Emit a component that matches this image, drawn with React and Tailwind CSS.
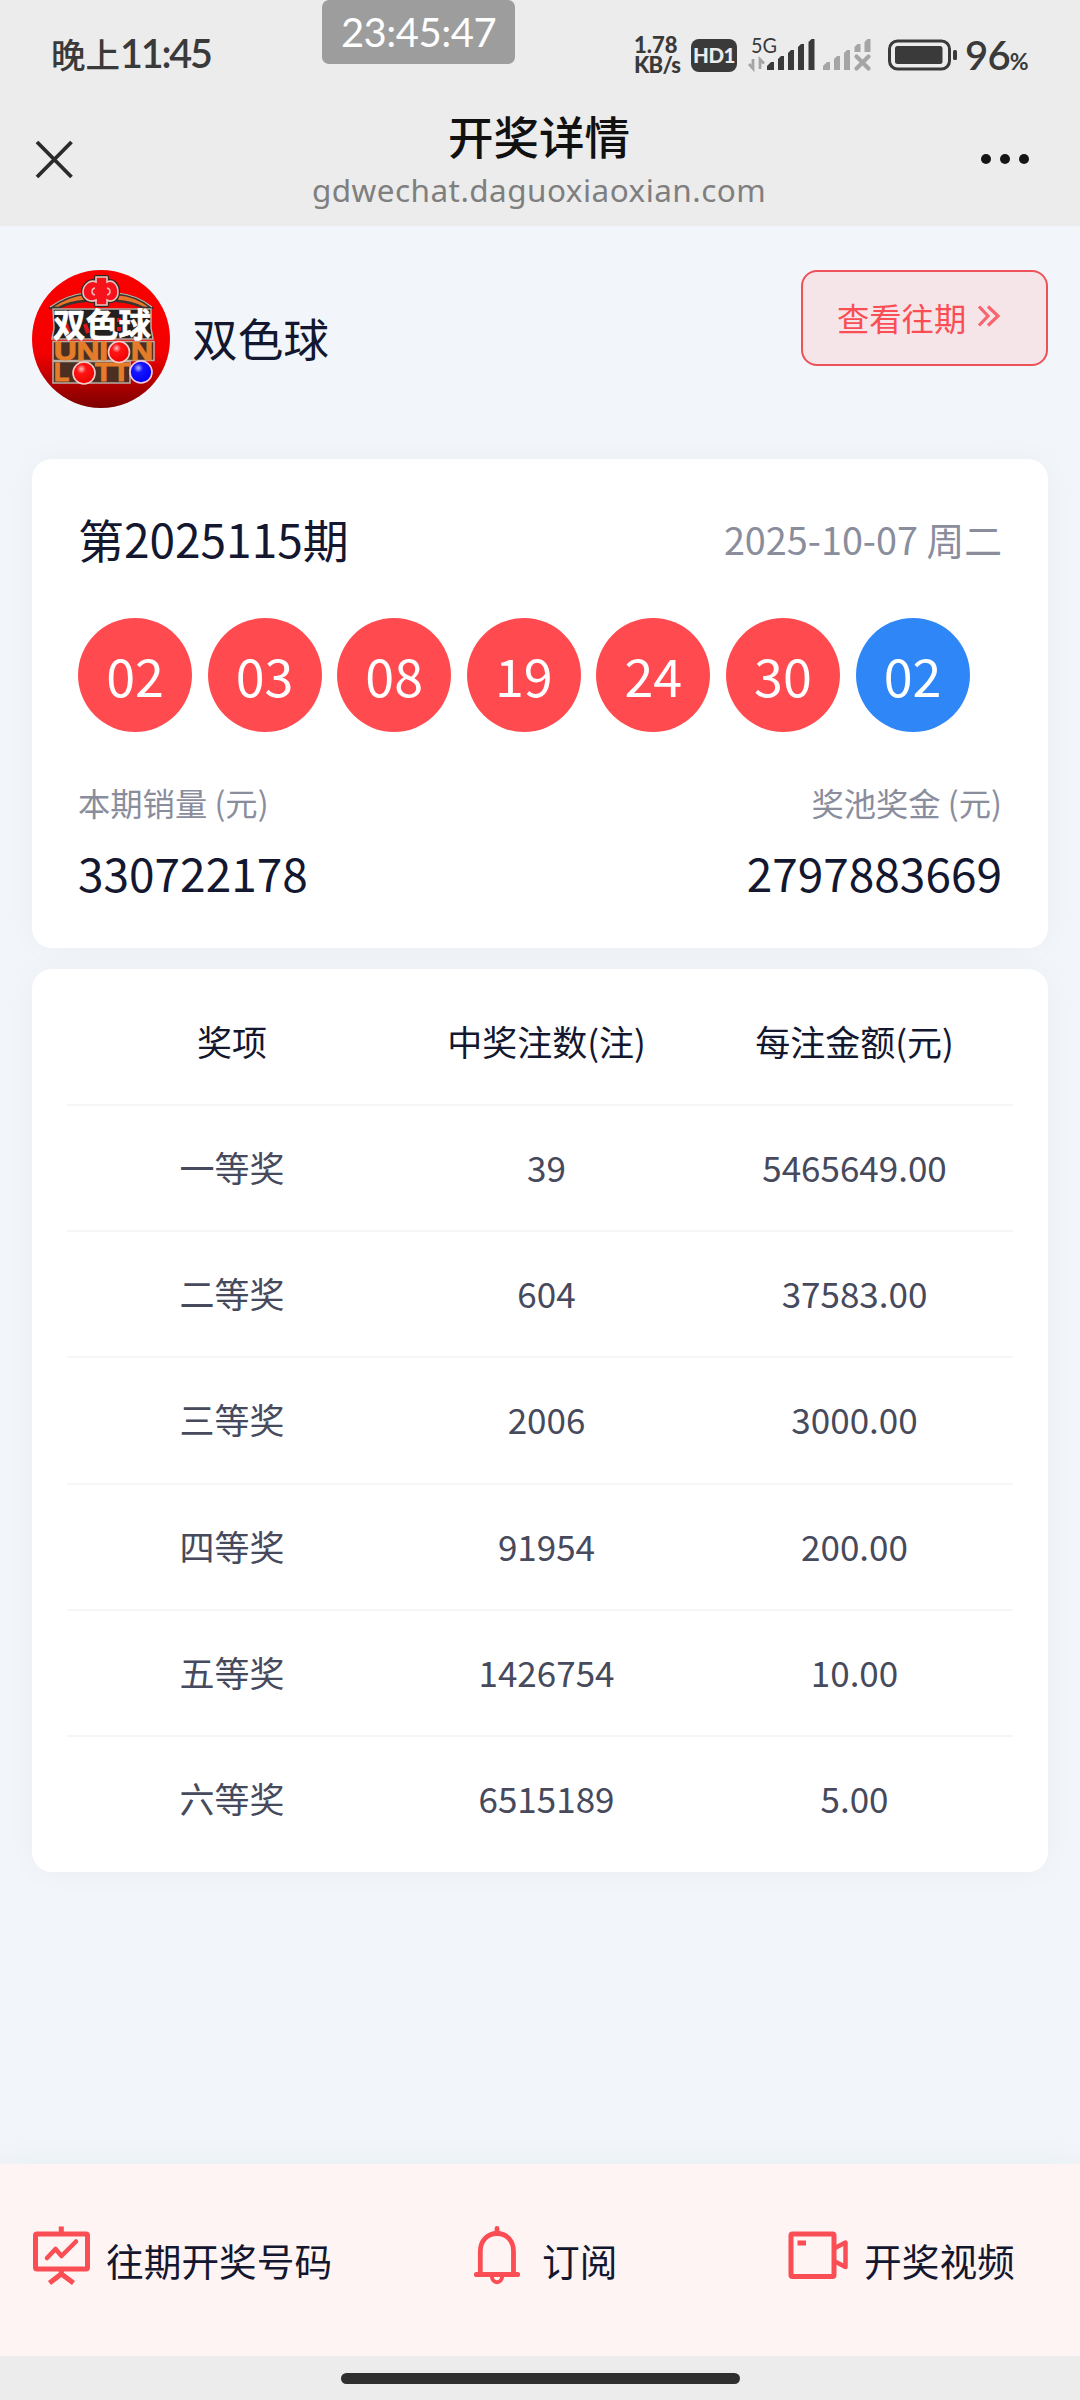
import React from 'react';

const redBalls = ['02', '03', '08', '19', '24', '30'];
const blueBall = '02';

const prizes = [
  { name: '一等奖', count: '39', amount: '5465649.00' },
  { name: '二等奖', count: '604', amount: '37583.00' },
  { name: '三等奖', count: '2006', amount: '3000.00' },
  { name: '四等奖', count: '91954', amount: '200.00' },
  { name: '五等奖', count: '1426754', amount: '10.00' },
  { name: '六等奖', count: '6515189', amount: '5.00' },
];

// Iconos de la barra de estado: señal, segunda SIM y batería
const SignalIcons = () => (
  <svg className="w-[124px] h-[36px]" viewBox="0 0 124 36">
    <text x="3" y="15.5" fontFamily="Lato" fontSize="20.5" textLength="26" lengthAdjust="spacingAndGlyphs" fill="#3a3a3a">5G</text>
    <path d="M5 22v9.500L1 27M12 32V22.500l4 4" fill="none" stroke="#a5a5a5" strokeWidth="2.800" />
    <g fill="#3a3a3a">
      <path d="M19 33v-4l4-4h3v8z" />
      <path d="M30 33V22l3-3h3v14z" />
      <path d="M40 33V16l3-3h3v20z" />
      <path d="M50 33V10l3-3h3v26z" />
      <path d="M60.500 33V5l3-3h3v31z" />
    </g>
    <g fill="#a5a5a5">
      <path d="M75 33v-4l4-4h3v8z" />
      <path d="M86 33V22l3-3h3v14z" />
      <path d="M96 33V16l3-3h3v20z" />
      <path d="M106.500 15v-5l3-3h3v8z" />
      <path d="M116.500 15V5l3-3h3v13z" />
      <path d="M108.500 19.500l12 12M120.500 19.500l-12 12" stroke="#a5a5a5" strokeWidth="4.200" strokeLinecap="round" />
    </g>
  </svg>
);

const BatteryIcon = () => (
  <svg className="w-[70px] h-[32px]" viewBox="0 0 70 32">
    <rect x="1.500" y="2" width="60" height="28" rx="8" fill="none" stroke="#3a3a3a" strokeWidth="3" />
    <rect x="7" y="7" width="47.500" height="18" rx="2.500" fill="#3a3a3a" />
    <rect x="65" y="11" width="4" height="10" rx="1.500" fill="#3a3a3a" />
  </svg>
);

const LottoLogo = () => (
  <svg className="w-[138px] h-[138px] shrink-0" viewBox="0 0 138 138">
    <defs>
      <linearGradient id="bg" x1="0" y1="0" x2="0" y2="1">
        <stop offset="0" stopColor="#fb0000" />
        <stop offset=".6" stopColor="#f40000" />
        <stop offset="1" stopColor="#7c0000" />
      </linearGradient>
      <radialGradient id="red" cx=".38" cy=".32" r=".7">
        <stop offset="0" stopColor="#ffc0c0" />
        <stop offset=".3" stopColor="#ff1515" />
        <stop offset="1" stopColor="#f00000" />
      </radialGradient>
      <radialGradient id="blue" cx=".38" cy=".32" r=".7">
        <stop offset="0" stopColor="#b8b8ff" />
        <stop offset=".3" stopColor="#1515ff" />
        <stop offset="1" stopColor="#0000f5" />
      </radialGradient>
    </defs>
    <circle cx="69" cy="69" r="69" fill="url(#bg)" />
    {/* Tejado y nudo */}
    <path d="M18 38Q36 25 53 24V31Q38 32 26 38ZM120 38Q104 25 85 24V31Q100 32 112 38Z" fill="#e9752b" stroke="#3a332d" strokeWidth="2.500" strokeLinejoin="round" />
    <path d="M18 37Q36 24.500 53 23M120 37Q104 24.500 85 23" fill="none" stroke="#c9b9a5" strokeWidth="1.200" />
    <path d="M64 7h11v5c6-3 11 3 11 10s-6 11-11 8v5H64v-5c-6 3-13-1-13-8s7-13 13-10z" fill="#f7111b" stroke="#2b2926" strokeWidth="4" strokeLinejoin="round" />
    <path d="M64 7h11v5c6-3 11 3 11 10s-6 11-11 8v5H64v-5c-6 3-13-1-13-8s7-13 13-10z" fill="#f7111b" stroke="#f0c3bd" strokeWidth="1.600" />
    <path d="M63 18c-4 1-4 6 0 7M75 18c4 1 4 6 0 7" fill="none" stroke="#f6b3b3" strokeWidth="1.600" />
    <path d="M21 39h98v19l2 11H20l2-11z" fill="#24201f" stroke="#b5aea6" strokeWidth="1.500" />
    <path d="M34 54l3 9M53 54l3 9M87 48v4M87 57v4" stroke="#e0141c" strokeWidth="4" />
    <text x="21" y="66.500" textLength="98" fontFamily='"Noto Sans CJK SC", sans-serif' fontSize="32.500" fontWeight="700" fill="#fff" stroke="#fff" strokeWidth=".7">双色球</text>
    {/* Las bolas ocupan el lugar de cada letra O */}
    <path d="M21 71.500h101v19H21zM21 91.500h77v21.500H21z" fill="#4a2f22" stroke="#b8afa6" strokeWidth="1.500" />
    <g fontFamily='"Liberation Sans", sans-serif' fontSize="25" fontWeight="700" fill="#e47c2a" stroke="#e47c2a" strokeWidth="1">
      <text x="22" y="89.500" textLength="54" lengthAdjust="spacingAndGlyphs">UNI</text>
      <text x="99" y="89.500" textLength="22" lengthAdjust="spacingAndGlyphs">N</text>
      <text x="22" y="111">L</text>
      <text x="63" y="111" textLength="35" lengthAdjust="spacingAndGlyphs">TT</text>
    </g>
    <circle cx="87" cy="82" r="10.500" fill="url(#red)" stroke="#f3cfcb" strokeWidth="1.600" />
    <circle cx="52" cy="103" r="11" fill="url(#red)" stroke="#f3cfcb" strokeWidth="1.600" />
    <circle cx="109" cy="102" r="11" fill="url(#blue)" stroke="#f3cfe0" strokeWidth="1.600" />
  </svg>
);

const BoardIcon = () => (
  <svg className="w-[58px] h-[60px]" viewBox="0 0 58 60" fill="none" stroke="#fb4d54" strokeWidth="5">
    <rect x="3.500" y="9" width="52" height="35" rx="1.500" />
    <path d="M29.300 1.500v7M29.300 44v5M17.500 58l11.800-9L41.500 58" />
    <path d="M15 33l8.500-9 6 7L44 16.500" strokeLinecap="round" strokeLinejoin="round" strokeWidth="4.500" />
  </svg>
);

const BellIcon = () => (
  <svg className="w-[46px] h-[60px]" viewBox="0 0 46 60" fill="none" stroke="#fb4d54" strokeWidth="4.800">
    <path d="M6.300 49V26.500C6.300 15.500 13.500 8.500 23 8.500s16.500 7 16.500 18V49" />
    <path d="M2.300 49.500h41.400M23 3.500v4" strokeLinecap="round" />
    <path d="M17.800 50.500c0 9 10.400 9 10.400 0" strokeWidth="4" />
  </svg>
);

const VideoIcon = () => (
  <svg className="w-[60px] h-[60px]" viewBox="0 0 60 60" fill="none" stroke="#fb4d54" strokeWidth="5">
    <rect x="3" y="9" width="43" height="42.500" rx="1.500" />
    <path d="M9.500 18h8.500" />
    <path d="M46 23.500l11.500-6v24.500l-11.500-6" strokeLinejoin="round" strokeWidth="4.500" />
  </svg>
);

const Ball = ({ number, blue }) => (
  <div className={`w-[114px] h-[114px] rounded-full flex items-center justify-center text-white text-[52px] leading-none pb-[1px] ${blue ? 'bg-[#2f86f6]' : 'bg-[#ff4b50]'}`}>
    {number}
  </div>
);

const StatusBar = () => (
  <div className="relative h-[108px] flex items-start text-[#3a3a3a]">
    <div className="ml-[51px] mt-[30px] h-[46px] flex items-center text-[34.500px] font-medium leading-none whitespace-nowrap">
      晚上<span className="font-['Lato'] font-semibold text-[39.500px] tracking-[-2.200px]">11:45</span>
    </div>

    {/* Reloj flotante */}
    <div className="absolute left-[322px] top-0 w-[193px] h-[64px] rounded-[7px] bg-[#9d9d9d] flex items-center justify-center text-white font-['Lato'] text-[40px] leading-[50px] tracking-[-0.500px] pb-[1px]">
      23:45:47
    </div>

    <div className="ml-auto mr-[50px] mt-[35px] h-[40px] flex items-center font-['Lato']">
      <div className="w-[48px] mr-[9px] -ml-[1px] font-black text-[22px] leading-[20px] whitespace-nowrap">
        <div>1.78</div>
        <div className="tracking-[-0.700px]">KB/s</div>
      </div>
      <div className="w-[46px] h-[33px] mr-[11px] rounded-[8px] bg-[#3a3a3a] text-[#ececec] font-black text-[20.500px] leading-none flex items-center justify-center tracking-[-0.500px]">HD1</div>
      <SignalIcons />
      <div className="w-[16px]" />
      <BatteryIcon />
      <div className="ml-[7px] w-[65px] flex items-baseline font-semibold leading-none">
        <span className="text-[40px] tracking-[-0.800px]">96</span>
        <span className="text-[23px] font-bold">%</span>
      </div>
    </div>
  </div>
);

const NavBar = () => (
  <div className="h-[118px] flex items-start">
    <svg className="ml-[35px] mt-[32px] w-[40px] h-[40px]" viewBox="0 0 40 40">
      <path d="M2 2l34.500 35M36.500 2l-34.500 35" stroke="#2b2b2b" strokeWidth="3.800" />
    </svg>
    <div className="mx-auto pl-[7px] text-center">
      <h1 className="text-[45.500px] h-[60px] leading-[54px] font-medium text-[#111]">开奖详情</h1>
      <p className="font-['Noto_Sans'] text-[31.500px] leading-[44px] tracking-[0.450px] text-[#7f7f7f] whitespace-nowrap">gdwechat.daguoxiaoxian.com</p>
    </div>
    <svg className="mr-[50px] -ml-[16px] mt-[45px] w-[50px] h-[12px]" viewBox="0 0 50 12" fill="#151515">
      <circle cx="6" cy="6" r="5" />
      <circle cx="25" cy="6" r="5" />
      <circle cx="44" cy="6" r="5" />
    </svg>
  </div>
);

export default function App() {
  return (
    <div className="w-[1080px] h-[2400px] overflow-hidden bg-[#f2f6fa] flex flex-col text-[#13172f] font-['Noto_Sans_CJK_SC','Noto_Sans',sans-serif]">
      <header className="bg-[#ececec] h-[226px] shrink-0">
        <StatusBar />
        <NavBar />
      </header>

      <main className="flex-1 px-8 pt-[44px]">
        <div className="h-[189px] flex items-start">
          <LottoLogo />
          <span className="ml-[22px] h-[138px] flex items-center pb-[2px] text-[45.700px] leading-none">双色球</span>
          <button className="ml-auto w-[247px] h-[96px] rounded-[16px] border-2 border-[#ee5157] bg-[#f5e5e9] text-[#fb4d54] text-[32.300px] leading-none flex items-center pl-[34px] pb-[2px]">
            查看往期
            <svg className="ml-[11px] mb-[2px] w-[24px] h-[24px]" viewBox="0 0 24 24" fill="none" stroke="#f8666d" strokeWidth="3.200">
              <path d="M2 2.500l9 9.500-9 9.500M11 2.500l10 9.500-10 9.500" />
            </svg>
          </button>
        </div>

        {/* Resultado del sorteo */}
        <section className="h-[489px] rounded-[20px] bg-white shadow-[0_0_30px_rgba(0,30,20,0.035)] px-[46px] pt-[46px]">
          <div className="h-[66px] flex items-center justify-between leading-none">
            <h2 className="text-[46px]">第2025115期</h2>
            <span className="text-[37.800px] pt-[1px] text-[#8a8d9c]">2025-10-07 周二</span>
          </div>
          <div className="mt-[47px] flex gap-[15.600px]">
            {redBalls.map((n) => <Ball key={n} number={n} />)}
            <Ball number={blueBall} blue />
          </div>
          <div className="mt-[48px] flex justify-between">
            <div>
              <p className="text-[32.300px] leading-[44px] text-[#8a8d9c]">本期销量 (元)</p>
              <p className="mt-[14px] text-[46px] leading-[68px]">330722178</p>
            </div>
            <div className="text-right">
              <p className="text-[32.300px] leading-[44px] text-[#8a8d9c]">奖池奖金 (元)</p>
              <p className="mt-[14px] text-[46px] leading-[68px]">2797883669</p>
            </div>
          </div>
        </section>

        {/* Tabla de premios */}
        <section className="mt-[21px] h-[903px] rounded-[20px] bg-white shadow-[0_0_30px_rgba(0,30,20,0.035)] px-[35px] pt-[11px] text-[35px] leading-none text-center">
          <div className="h-[126px] grid grid-cols-[330px_299px_317px] items-center border-b-2 border-[#f5f6f7] pb-[3px]">
            <span>奖项</span>
            <span>中奖注数(注)</span>
            <span>每注金额(元)</span>
          </div>
          {prizes.map((p) => (
            <div key={p.name} className="h-[126.200px] grid grid-cols-[330px_299px_317px] items-center border-b-2 border-[#f5f6f7] last:border-transparent pb-[3px] text-[#464a5c]">
              <span>{p.name}</span>
              <span>{p.count}</span>
              <span>{p.amount}</span>
            </div>
          ))}
        </section>
      </main>

      <footer className="h-[192px] shrink-0 bg-[#fef4f3] shadow-[0_0_30px_rgba(0,60,60,0.05)] flex items-start pt-[61px] text-[37.700px] leading-none">
        <div className="ml-[32px] w-[442px] flex">
          <BoardIcon />
          <span className="ml-[16px] mt-[16px]">往期开奖号码</span>
        </div>
        <div className="w-[314px] flex">
          <BellIcon />
          <span className="ml-[22px] mt-[16px]">订阅</span>
        </div>
        <div className="flex">
          <VideoIcon />
          <span className="ml-[16px] mt-[16px]">开奖视频</span>
        </div>
      </footer>
      <div className="h-[44px] shrink-0 bg-[#ececec] flex justify-center pt-[17px]">
        <div className="w-[399px] h-[11px] rounded-full bg-[#2f2f2f]" />
      </div>
    </div>
  );
}
